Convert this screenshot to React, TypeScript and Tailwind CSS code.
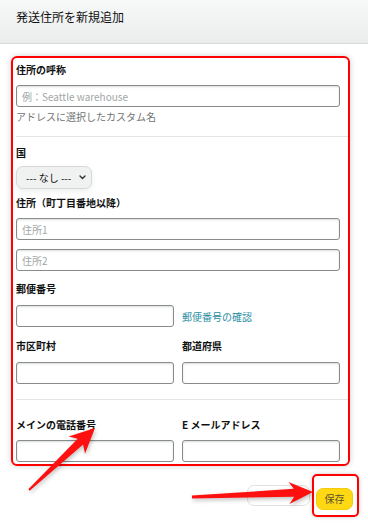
import React from "react";

/**
 * 発送住所を新規追加 — form with red annotation marks (box + arrows)
 */

const inputCls =
  "block h-[22px] w-full rounded-[3px] border border-[#888c8c] bg-white px-[5px] text-[10px] text-[#0f1111] shadow-[inset_0_1px_2px_rgba(15,17,17,0.15)] outline-none placeholder:text-[#a2a6a6]";

function Label({ children, className = "" }: { children: React.ReactNode; className?: string }) {
  return <div className={`h-[15px] text-[10px] font-bold leading-[15px] text-[#0f1111] ${className}`}>{children}</div>;
}

function Arrows() {
  return (
    <svg
      className="pointer-events-none absolute left-0 top-0 h-[525px] w-[368px] drop-shadow-[1px_2px_2px_rgba(0,0,0,0.25)]"
      viewBox="0 0 368 525"
    >
      {/* arrow pointing at phone number label */}
      <polygon
        fill="#ff1010"
        points="28.3,489.3 77.7,438.8 68.6,436.4 95,428 85,453.8 83.1,444.6 29.7,490.7"
      />
      {/* arrow pointing at save button */}
      <polygon
        fill="#ff1010"
        points="191.9,495.5 293.8,488.8 288.5,482 313,492 289.5,504 294.2,496.8 192.1,498.5"
      />
    </svg>
  );
}

export default function App() {
  return (
    <div className="relative h-[525px] w-[368px] overflow-hidden bg-white font-['Noto_Sans_CJK_JP',sans-serif]">
      {/* header */}
      <div className="h-[44px] border-b border-[#d5d9d9] bg-gradient-to-b from-[#f7f8f8] to-[#ebecec] px-4 pt-[8px] text-[12px] leading-[17px] text-[#0f1111]">
        発送住所を新規追加
      </div>

      {/* form, wrapped in the red annotation box */}
      <div className="ml-[11px] mt-[12px] w-[339px] rounded-[6px] border-2 border-[#ff0000] pb-[2px] pl-[3px] pr-[8px] pt-[4px] shadow-[0_0_6px_rgba(0,0,0,0.18)]">
        <div className="w-[324px]">
          <Label>住所の呼称</Label>
          <input className={`${inputCls} mt-[8px]`} placeholder="例：Seattle warehouse" />
          <div className="mt-[3px] h-[14px] text-[10px] leading-[14px] text-[#6f7373]">アドレスに選択したカスタム名</div>
        </div>

        <div className="-mr-[8px] mt-[12px] h-px bg-[#e3e6e6]" />

        <div className="w-[324px]">
          <div className="mt-[9px] h-[14px] text-[10px] font-bold leading-[14px] text-[#0f1111]">国</div>
          <button className="mt-[6px] flex h-[23px] w-[76px] items-center gap-[8px] rounded-[7px] border border-[#d5d9d9] bg-[#f0f2f2] pl-[9px] text-[10px] text-[#0f1111] shadow-[0_2px_5px_rgba(213,217,217,0.5)]">
            <span>--- なし ---</span>
            <svg width="7" height="5" viewBox="0 0 7 5">
              <path d="M1 1l2.5 2.5L6 1" fill="none" stroke="#333" strokeWidth="1.4" strokeLinecap="round" />
            </svg>
          </button>

          <Label className="mt-[6px]">住所（町丁目番地以降）</Label>
          <input className={`${inputCls} mt-[8px]`} placeholder="住所1" />
          <input className={`${inputCls} mt-[9px]`} placeholder="住所2" />

          <Label className="mt-[10px]">郵便番号</Label>
          <div className="mt-[9px] flex items-center gap-[8px]">
            <input className={`${inputCls} !w-[158px]`} />
            <span className="text-[10px] text-[#2a8fa3]">郵便番号の確認</span>
          </div>

          <div className="mt-[11px] grid grid-cols-2 gap-x-[8px]">
            <Label>市区町村</Label>
            <Label>都道府県</Label>
            <input className={`${inputCls} mt-[9px]`} />
            <input className={`${inputCls} mt-[9px]`} />
          </div>
        </div>

        <div className="-mr-[8px] mt-[15px] h-px bg-[#e3e6e6]" />

        <div className="mt-[17px] grid w-[324px] grid-cols-2 gap-x-[8px]">
          <Label>メインの電話番号</Label>
          <Label>E メールアドレス</Label>
          <input className={`${inputCls} mt-[8px]`} />
          <input className={`${inputCls} mt-[8px]`} />
        </div>
      </div>

      {/* footer buttons */}
      <div className="mt-[18px] flex justify-end gap-[6px] pr-[15px]">
        <button aria-label="キャンセル" className="mt-[1px] h-[21px] w-[63px] rounded-[7px] border border-[#dfe2e2] bg-white" />
        <div className="relative">
          <button className="h-[22px] w-[37px] rounded-[7px] border border-[#f2cd0e] bg-[#ffd814] text-[10px] text-[#5b5330]">
            保存
          </button>
          <div className="pointer-events-none absolute -bottom-[7px] -left-[4px] -right-[6px] -top-[10px] rounded-[5px] border-2 border-[#ff0000] shadow-[0_0_4px_rgba(0,0,0,0.2)]" />
        </div>
      </div>

      <Arrows />
    </div>
  );
}
